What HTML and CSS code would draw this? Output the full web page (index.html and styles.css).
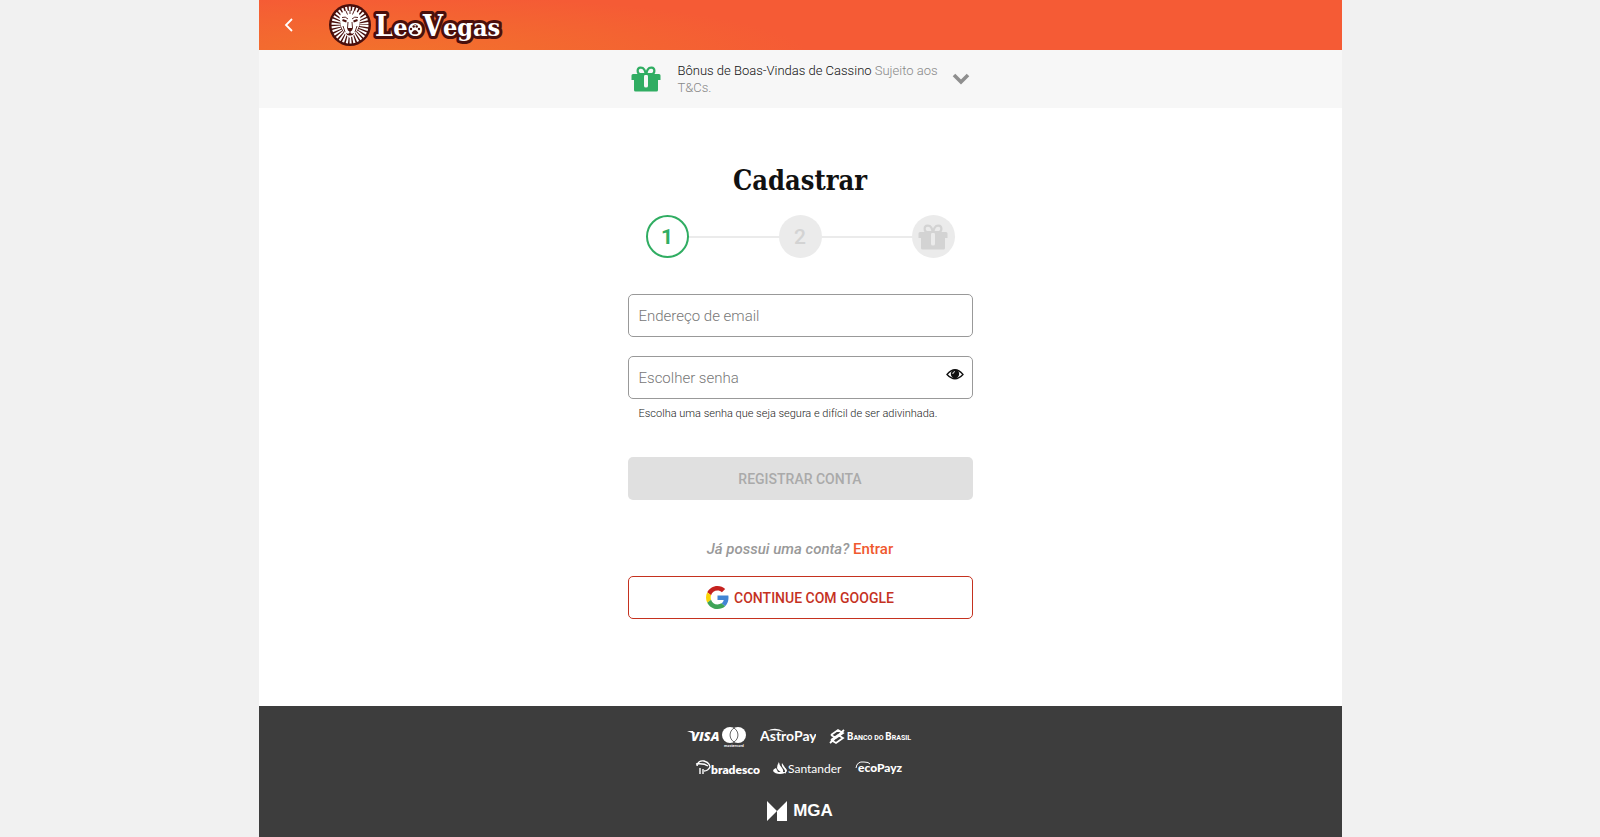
FILE: index.html
```
<!DOCTYPE html>
<html lang="pt-BR">
<head>
    <meta charset="UTF-8">
    <meta name="viewport" content="width=device-width, initial-scale=1.0"/>
    <title>Cadastrar - LeoVegas</title>
    <link rel="stylesheet" href="styles.css">
</head>
<body>
<svg class="sprite" aria-hidden="true">
    <symbol id="gift" viewBox="0 0 30 26">
        <path d="M9 8C6 7.500 5.500 2 9.500 1.700C13 1.500 14.500 5 14.500 8ZM21 8C24 7.500 24.500 2 20.500 1.700C17 1.500 15.500 5 15.500 8Z" fill="none" stroke="currentColor" stroke-width="2.200"/>
        <path fill="currentColor" fill-rule="evenodd" d="M2 8H28Q29.500 8 29.500 9.500V14H27V24Q27 25.500 25.500 25.500H4.500Q3 25.500 3 24V14H.5V9.500Q.5 8 2 8ZM15 8.500Q13 8.500 13 10.500V20Q13 21.500 15 21.500T17 20V10.500Q17 8.500 15 8.500Z"/>
    </symbol>
</svg>
<div class="g-page">
    <header class="g-hd">
        <a class="m-back" href="#" aria-label="Voltar">
            <svg width="10" height="14" viewBox="0 0 10 14"><path d="M8 1L2 7L8 13" fill="none" stroke="#fff" stroke-width="1.800"/></svg>
        </a>
        <a class="m-logo" href="#" aria-label="LeoVegas">
            <svg width="180" height="50" viewBox="0 0 180 50">
                <circle cx="22" cy="25" r="21" fill="#4a0f0c"/>
                <circle cx="22" cy="25" r="14" fill="none" stroke="#fff" stroke-width="9" stroke-dasharray="1.700 1.232"/>
                <path d="M22 11C17 10 13 12 12 16C11 18 12 20 12.500 22C12 26 15 31 18 35L22 38L26 35C29 31 32 26 31.500 22C32 20 33 18 32 16C31 12 27 10 22 11Z" fill="#fff"/>
                <path d="M14.500 20L18.500 21.500M29.500 20L25.500 21.500" stroke="#4a0f0c" stroke-width="2"/>
                <path d="M14 17.500Q17.500 16 20 19M30 17.500Q26.500 16 24 19M20 22L19.500 28M24 22L24.500 28M18 11L19.500 14.500M22 10V14M26 11L24.500 14.500M15 26L17 32M29 26L27 32" fill="none" stroke="#4a0f0c" stroke-width=".9"/>
                <path d="M19 28H25L24 30.500L22.500 31.500V33Q24.500 34.500 26.500 32.500Q25 36 22 35.500Q19 36 17.500 32.500Q19.500 34.500 21.500 33V31.500L20 30.500Z" fill="#4a0f0c"/>
                <g class="m-logo-text">
                    <text x="47" y="36"><tspan class="cap">L</tspan>eo<tspan class="cap">V</tspan>egas</text>
                </g>
                <circle cx="87" cy="30" r="5" fill="#fff"/>
                <g fill="#4a0f0c">
                    <path d="M83.500 33Q87 27 90.500 33Q88.500 35 87 34Q85.500 35 83.500 33Z"/>
                    <circle cx="83" cy="29" r="1.200"/><circle cx="85.700" cy="26.500" r="1.200"/><circle cx="88.700" cy="26.500" r="1.200"/><circle cx="91" cy="29" r="1.200"/>
                </g>
            </svg>
        </a>
    </header>
    <section class="g-bonus">
        <div class="m-bonus">
            <svg class="m-bonus-gift" width="30" height="26"><use href="#gift"/></svg>
            <p>Bônus de Boas-Vindas de Cassino <a href="#">Sujeito aos T&amp;Cs.</a></p>
            <button type="button" class="m-bonus-toggle" aria-label="Mostrar detalhes">
                <svg width="18" height="12" viewBox="0 0 18 12"><path d="M2 2L9 9L16 2" fill="none" stroke="#8f8f8f" stroke-width="3.600"/></svg>
            </button>
        </div>
    </section>
    <main class="g-main">
        <h1>Cadastrar</h1>
        <ol class="m-steps">
            <li class="active">1</li>
            <li>2</li>
            <li aria-label="Bônus"><svg width="30" height="26"><use href="#gift"/></svg></li>
        </ol>
        <form class="m-form">
            <input class="m-input" type="email" placeholder="Endereço de email" aria-label="Endereço de email">
            <div class="m-pass">
                <input class="m-input" type="password" placeholder="Escolher senha" aria-label="Escolher senha" aria-describedby="j-hint">
                <button type="button" aria-label="Mostrar senha">
                    <svg width="18" height="13" viewBox="0 0 18 13">
                        <path d="M1 6.500Q9-3 17 6.500Q9 15 1 6.500Z" fill="#fff" stroke="#111" stroke-width="1.300"/>
                        <circle cx="9" cy="6" r="4.200" fill="#111"/>
                        <path d="M6.800 6Q6.800 3.800 9 3.600" fill="none" stroke="#fff" stroke-width=".9"/>
                    </svg>
                </button>
            </div>
            <p id="j-hint" class="m-hint">Escolha uma senha que seja segura e difícil de ser adivinhada.</p>
            <button class="m-submit" type="submit" disabled>REGISTRAR CONTA</button>
        </form>
        <p class="m-login"><em>Já possui uma conta?</em> <a href="#">Entrar</a></p>
        <button class="m-google" type="button">
            <svg width="23" height="23" viewBox="0 0 48 48">
                <path fill="#c5221f" d="M24 9.500c3.540 0 6.710 1.220 9.210 3.600l6.850-6.850C35.900 2.380 30.470 0 24 0 14.620 0 6.510 5.380 2.560 13.220l7.980 6.190C12.430 13.720 17.740 9.500 24 9.500z"/>
                <path fill="#4285d4" d="M46.980 24.550c0-1.570-.15-3.090-.38-4.550H24v9.020h12.940c-.58 2.960-2.260 5.480-4.780 7.180l7.730 6c4.510-4.180 7.090-10.360 7.090-17.650z"/>
                <path fill="#fbd505" d="M10.530 28.590c-.48-1.450-.76-2.990-.76-4.590s.27-3.140.76-4.590l-7.980-6.190C.92 16.460 0 20.120 0 24c0 3.880.92 7.540 2.560 10.780l7.970-6.190z"/>
                <path fill="#3ea457" d="M24 48c6.480 0 11.930-2.130 15.890-5.810l-7.730-6c-2.150 1.450-4.920 2.300-8.160 2.300-6.260 0-11.570-4.220-13.470-9.910l-7.980 6.190C6.510 42.620 14.620 48 24 48z"/>
            </svg>
            CONTINUE COM GOOGLE
        </button>
    </main>
    <footer class="g-ft">
        <div class="m-pay">
            <svg width="60" height="22" viewBox="0 0 60 22" fill="#fff">
                <text class="visa" x="4" y="15">VISA</text>
                <path d="M0 5H6L8 9L5 7Z"/>
                <circle cx="43" cy="9" r="8"/>
                <circle cx="51" cy="9" r="8"/>
                <path d="M47 2.100A8 8 0 0 0 47 15.900A8 8 0 0 0 47 2.100Z" fill="#fff" stroke="#3d3d3d" stroke-width=".8"/>
                <text class="master" x="37" y="21">mastercard</text>
            </svg>
            <svg width="56" height="22" viewBox="0 0 56 22" fill="#fff">
                <text class="astro" x="0" y="15">AstroPay</text>
                <path d="M7 5Q16 0 24 6Q15 3 7 5Z"/>
            </svg>
            <svg width="84" height="22" viewBox="0 0 84 22" fill="none" stroke="#fff" stroke-width="1.800">
                <path d="M2 9L9 4L14 7L7 12L2 9M2 14L9 9L14 12L7 17L2 14M1 17L15 4"/>
                <text class="banco" x="18" y="14"><tspan class="big">B</tspan>ANCO DO <tspan class="big">B</tspan>RASIL</text>
            </svg>
        </div>
        <div class="m-pay">
            <svg width="65" height="20" viewBox="0 0 65 20" fill="#fff">
                <path d="M2 7Q3 1 9 2Q15 4 15 8Q13 12 9 12M1 5Q9 4 13 7M5 9V15M8 10V15" fill="none" stroke="#fff" stroke-width="1.400"/>
                <text class="bradesco" x="16" y="15">bradesco</text>
            </svg>
            <svg width="69" height="20" viewBox="0 0 69 20" fill="#fff">
                <path d="M6 3Q6 6 9 9Q11 11 10 14Q5 12 4 9Q4 6 6 3ZM9 4L13 10Q14 13 12 15Q13 12 11 10Q8 7 9 4Z"/>
                <path d="M3 9Q0 10 0 12Q2 15 7 15T14 12Q14 10 12 9L12 13H5Z"/>
                <text class="santander" x="15" y="14">Santander</text>
            </svg>
            <svg width="51" height="20" viewBox="0 0 51 20" fill="#fff">
                <path d="M1 9Q2 2 9 3Q14 3 15 5" fill="none" stroke="#fff"/>
                <text class="eco" x="3" y="13">ecoPayz</text>
            </svg>
        </div>
        <a class="m-mga" href="#">
            <svg width="20" height="20" viewBox="0 0 20 20"><path d="M0 0L10 10L20 0V20H10V10L0 20Z" fill="#fff"/></svg>
            MGA
        </a>
    </footer>
</div>
</body>
</html>
```
FILE: styles.css
```
* {
    margin: 0;
    padding: 0;
    box-sizing: border-box;
}
body{
    background-color: #f1f1f1;
    font-family: Roboto, "Liberation Sans", sans-serif;
    color: #333;
}
a{
    text-decoration: none;
}
button{
    font-family: inherit;
    cursor: pointer;
}
svg{
    flex: none;
    display: block;
}
.sprite{
    position: absolute;
    width: 0;
    height: 0;
}
.g-page{
    display: flex;
    flex-direction: column;
    max-width: 1083px;
    min-height: 100vh;
    margin: 0 auto;
    background-color: #fff;
}
.g-hd{
    display: flex;
    align-items: center;
    gap: 34px;
    height: 50px;
    padding-left: 25px;
    background: radial-gradient(ellipse 420px 60px at 12% 110%, #f2722c, #f55b35);
}
.m-logo-text{
    font: bold 25px "Roboto Slab", "DejaVu Serif Condensed", "DejaVu Serif", serif;
    fill: #fff;
    stroke: #4a0f0c;
    stroke-width: 6px;
    stroke-linejoin: round;
    paint-order: stroke;
}
.m-logo-text .cap{
    font-size: 29px;
}
.g-bonus{
    padding: 12px 20px;
    background-color: #f7f7f7;
}
.m-bonus{
    display: flex;
    align-items: center;
    max-width: 345px;
    margin: 0 auto;
    padding: 0 3px;
    font-size: 13px;
    line-height: 17px;
}
.m-bonus-gift{
    color: #30ad62;
}
.m-bonus p{
    flex: 1;
    margin: 0 10px 0 17px;
    font-weight: 300;
    color: #111;
}
.m-bonus a{
    color: #888;
}
.m-bonus-toggle{
    border: 0;
    background: none;
}
.g-main{
    flex: 1;
    width: 100%;
    max-width: 385px;
    margin: 0 auto;
    padding: 53px 20px 48px;
}
.g-main h1{
    font: bold 27px/40px "Roboto Slab", "DejaVu Serif Condensed", "DejaVu Serif", serif;
    color: #111;
    text-align: center;
}
.m-steps{
    display: flex;
    align-items: center;
    justify-content: space-between;
    margin: 14px 18px 36px;
    background: linear-gradient(#ebebeb, #ebebeb) center / 100% 2px no-repeat;
    list-style: none;
}
.m-steps li{
    display: flex;
    align-items: center;
    justify-content: center;
    width: 43px;
    height: 43px;
    border-radius: 50%;
    background-color: #ebebeb;
    font-size: 21px;
    font-weight: 500;
    color: #d3d3d3;
}
.m-steps li.active{
    border: 2px solid #30ad62;
    background-color: #fff;
    font-weight: 700;
    color: #30ad62;
}
.m-input{
    display: block;
    width: 100%;
    height: 43px;
    padding: 0 10px;
    border: 1px solid #999;
    border-radius: 5px;
    background-color: #fff;
    font-family: inherit;
    font-size: 15px;
    font-weight: 300;
    color: #333;
}
.m-input::placeholder{
    color: #777;
}
.m-pass{
    position: relative;
    margin-top: 19px;
}
.m-pass button{
    position: absolute;
    top: 12px;
    right: 9px;
    border: 0;
    background: none;
}
.m-hint{
    margin: 7px 11px 36px;
    font-size: 11px;
    font-weight: 300;
    line-height: 15px;
    color: #222;
}
.m-submit,
.m-google{
    display: flex;
    align-items: center;
    justify-content: center;
    gap: 5px;
    width: 100%;
    height: 43px;
    border: 0;
    border-radius: 5px;
    font-size: 14px;
    font-weight: 500;
}
.m-submit{
    background-color: #e0e0e0;
    color: #aaa;
}
.m-login{
    margin: 39px 0 17px;
    font-size: 15px;
    font-weight: 500;
    line-height: 20px;
    text-align: center;
    color: #999;
}
.m-login a{
    color: #f0592f;
}
.m-google{
    border: 1px solid #c5321f;
    background-color: #fff;
    color: #c5321f;
}
.g-ft{
    display: flex;
    flex-direction: column;
    align-items: center;
    padding: 20px 20px 16px;
    background-color: #3d3d3d;
}
.m-pay{
    display: flex;
    gap: 13px;
    margin-bottom: 11px;
}
.m-mga{
    display: flex;
    align-items: center;
    gap: 6px;
    margin-top: 11px;
    font: bold 17px/20px "Liberation Sans", sans-serif;
    color: #fff;
}
.m-pay text{
    font-family: Lato, "Noto Sans", sans-serif;
    font-weight: 700;
}
.m-pay .visa{
    font-family: "Open Sans", sans-serif;
    font-size: 13px;
    font-style: italic;
    font-weight: 800;
}
.m-pay .master{
    font-size: 4px;
}
.m-pay .astro{
    font-size: 14px;
}
.m-pay .banco{
    font-family: "Liberation Sans Narrow", Roboto, sans-serif;
    font-size: 7px;
    fill: #fff;
    stroke: none;
}
.m-pay .big{
    font-size: 10px;
}
.m-pay .bradesco{
    font-size: 12px;
    font-weight: 800;
}
.m-pay .santander{
    font-size: 12px;
    font-weight: 400;
}
.m-pay .eco{
    font-size: 12px;
    font-weight: 900;
}
```
